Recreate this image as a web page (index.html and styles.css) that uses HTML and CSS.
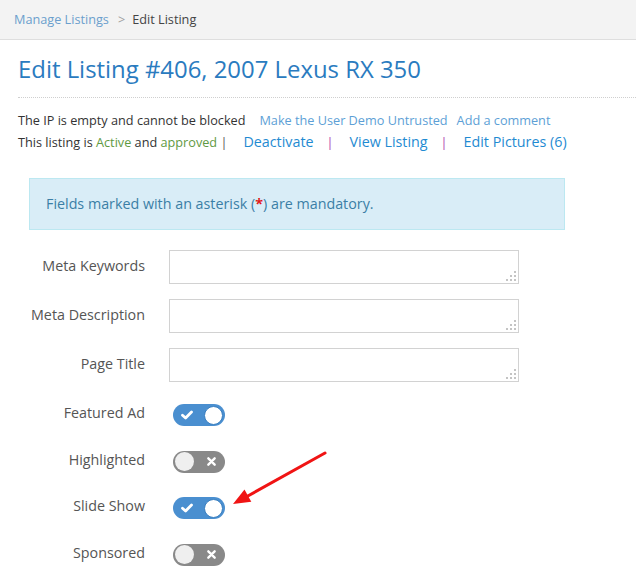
FILE: index.html
```html
<!DOCTYPE html>
<html lang="en">
<head>
<meta charset="utf-8">
<title>Edit Listing</title>
<link rel="stylesheet" href="styles.css">
</head>
<body>
<div class="topbar">
  <a class="crumb-link" href="#">Manage Listings</a><span class="crumb-sep">&gt;</span><span class="crumb-current">Edit Listing</span>
</div>
<main class="main">
  <h1 class="title">Edit Listing #406, 2007 Lexus RX 350</h1>
  <div class="info-lines">
    <div class="line">The IP is empty and cannot be blocked<a class="small-link gap15" href="#">Make the User Demo Untrusted</a><a class="small-link gap10" href="#">Add a comment</a></div>
    <div class="line">This listing is <span class="ok">Active</span> and <span class="ok">approved</span> <span class="pipe-dark">|</span><a class="big-link" href="#">Deactivate</a><span class="pipe">|</span><a class="big-link" href="#">View Listing</a><span class="pipe">|</span><a class="big-link" href="#">Edit Pictures (6)</a></div>
  </div>
  <div class="alert">Fields marked with an asterisk (<span class="req">*</span>) are mandatory.</div>
  <form class="form">
    <div class="row">
      <label class="label">Meta Keywords</label>
      <span class="field"><textarea class="area"></textarea></span>
    </div>
    <div class="row">
      <label class="label">Meta Description</label>
      <span class="field"><textarea class="area"></textarea></span>
    </div>
    <div class="row last-field">
      <label class="label">Page Title</label>
      <span class="field"><textarea class="area"></textarea></span>
    </div>
    <div class="row toggle-row">
      <label class="label tl">Featured Ad</label>
      <span class="switch on"><svg class="check" viewBox="0 0 12 10" width="12" height="10"><path d="M1.5 5.2 L4.6 8 L10.5 2" fill="none" stroke="#fff" stroke-width="2.8" stroke-linecap="round" stroke-linejoin="round"/></svg><span class="knob"></span></span>
    </div>
    <div class="row toggle-row">
      <label class="label tl">Highlighted</label>
      <span class="switch off"><span class="knob"></span><svg class="cross" viewBox="0 0 10 10" width="9" height="9"><path d="M1.5 1.5 L8.5 8.5 M8.5 1.5 L1.5 8.5" fill="none" stroke="#fff" stroke-width="2.6" stroke-linecap="round"/></svg></span>
    </div>
    <div class="row toggle-row">
      <label class="label tl">Slide Show</label>
      <span class="switch on"><svg class="check" viewBox="0 0 12 10" width="12" height="10"><path d="M1.5 5.2 L4.6 8 L10.5 2" fill="none" stroke="#fff" stroke-width="2.8" stroke-linecap="round" stroke-linejoin="round"/></svg><span class="knob"></span></span>
    </div>
    <div class="row toggle-row">
      <label class="label tl">Sponsored</label>
      <span class="switch off"><span class="knob"></span><svg class="cross" viewBox="0 0 10 10" width="9" height="9"><path d="M1.5 1.5 L8.5 8.5 M8.5 1.5 L1.5 8.5" fill="none" stroke="#fff" stroke-width="2.6" stroke-linecap="round"/></svg></span>
    </div>
  </form>
</main>
<svg class="arrow" width="636" height="581" viewBox="0 0 636 581">
  <line x1="325" y1="453" x2="246" y2="497" stroke="#f01414" stroke-width="3" stroke-linecap="round"/>
  <polygon points="233,504 244.5,489.6 251.3,501.8" fill="#f01414"/>
</svg>
</body>
</html>
```
FILE: styles.css
```css
html, body {
  margin: 0;
  padding: 0;
}
body {
  font-family: "Open Sans", "Liberation Sans", sans-serif;
  color: #444;
  background: #fff;
  position: relative;
  width: 636px;
  height: 581px;
  overflow: hidden;
}
a {
  text-decoration: none;
}
.topbar {
  height: 39px;
  line-height: 39px;
  background: #f3f3f3;
  border-bottom: 1px solid #dedede;
  padding-left: 14px;
  font-size: 12.7px;
}
.crumb-link {
  color: #6b9fcd;
}
.crumb-sep {
  color: #a0a0a0;
  margin: 0 7px 0 9px;
}
.crumb-current {
  color: #444;
}
.main {
  padding-left: 18px;
}
.title {
  margin: 14px 0 0 0;
  font-size: 23.9px;
  line-height: 30px;
  font-weight: 400;
  color: #2a7bbf;
  padding-bottom: 13px;
  border-bottom: 1px dotted #cfcfcf;
}
.info-lines {
  margin-top: 11px;
  font-size: 12.7px;
  line-height: 22px;
  color: #333;
}
.line {
  height: 22px;
  white-space: nowrap;
}
.ok {
  color: #5f9a43;
}
.small-link {
  color: #5d9fd6;
}
.gap15 {
  margin-left: 14px;
}
.gap10 {
  margin-left: 9px;
}
.big-link {
  color: #1f8bd2;
  font-size: 14.3px;
  margin-left: 16px;
}
.pipe-dark {
  color: #555;
}
.pipe {
  color: #b03cb0;
  margin-left: 13px;
}
.alert {
  margin: 25px 0 0 11px;
  width: 502px;
  padding: 15px 16px;
  line-height: 20px;
  font-size: 14.3px;
  background: #d9edf7;
  border: 1px solid #bce8f1;
  color: #3b7fa6;
}
.req {
  color: #e21b1b;
  font-weight: 700;
}
.form {
  margin-top: 20px;
}
.row {
  display: grid;
  grid-template-columns: 127px 350px;
  column-gap: 24px;
  align-items: start;
  margin-bottom: 15px;
}
.row.last-field {
  margin-bottom: 22px;
}
.row.toggle-row {
  margin-bottom: 24.5px;
}
.label {
  font-size: 14.3px;
  line-height: 20px;
  color: #555;
  text-align: right;
  padding-top: 6px;
}
.label.tl {
  padding-top: 0;
  margin-top: -1px;
}
.field {
  position: relative;
  display: block;
  width: 350px;
  height: 34px;
}
.field::after {
  content: "";
  position: absolute;
  right: 3px;
  bottom: 3px;
  width: 2px;
  height: 2px;
  background: #c4c4c4;
  box-shadow: -4px 0 #c4c4c4, -8px 0 #c4c4c4, 0 -4px #c4c4c4, -4px -4px #c4c4c4, 0 -8px #c4c4c4;
}
.area {
  box-sizing: border-box;
  display: block;
  width: 350px;
  height: 34px;
  margin: 0;
  border: 1px solid #d2d2d2;
  resize: none;
  background: #fff;
}
.switch {
  box-sizing: border-box;
  display: flex;
  align-items: center;
  justify-content: space-between;
  width: 52px;
  height: 22px;
  border-radius: 11px;
  margin-left: 4px;
  padding: 0 2px 0 2px;
}
.switch.on {
  background: #4a8fd0;
  padding-left: 8px;
}
.switch.off {
  background: #898989;
  padding-right: 9px;
}
.knob {
  width: 19px;
  height: 19px;
  border-radius: 50%;
}
.switch.on .knob {
  background: #fff;
  box-sizing: border-box;
  border: 1px solid #3a7fc0;
}
.switch.off .knob {
  background: #efefef;
}
.check, .cross {
  display: block;
}
.arrow {
  position: absolute;
  left: 0;
  top: 0;
  pointer-events: none;
}
```
